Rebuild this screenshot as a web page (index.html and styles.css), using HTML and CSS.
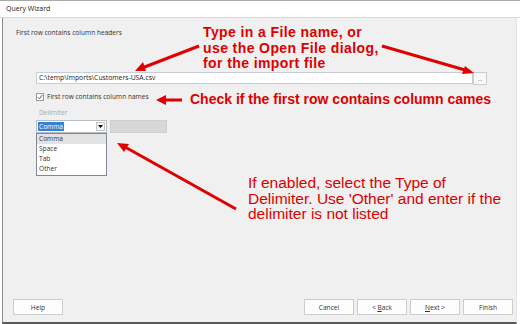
FILE: index.html
```html
<!DOCTYPE html>
<html lang="en">
<head>
    <meta charset="UTF-8">
    <title>Query Wizard</title>
    <link rel="stylesheet" href="styles.css">
</head>
<body>
<div class="window">
    <div class="titlebar">Query Wizard</div>
    <div class="client">
        <p class="page-title">First row contains column headers</p>

        <div class="file-row">
            <div class="textbox file-row__path">C:\temp\Imports\Customers-USA.csv</div>
            <button class="file-row__browse">...</button>
        </div>

        <label class="check-row">
            <span class="checkbox">
                <svg width="6" height="6" viewBox="0 0 6 6"><path d="M0.8 3.2 L2.4 4.8 L5.3 1" fill="none" stroke="#555" stroke-width="1"/></svg>
            </span>
            First row contains column names
        </label>

        <div class="group-label">Delimiter</div>
        <div class="delim-row">
            <div class="combo">
                <span class="combo__value"><span class="combo__selected">Comma</span></span>
                <span class="combo__btn">
                    <svg width="5" height="3" viewBox="0 0 5 3"><path d="M0 0 H5 L2.5 3 Z" fill="#000"/></svg>
                </span>
                <ul class="combo__list">
                    <li class="combo__item combo__item--hot">Comma</li>
                    <li class="combo__item">Space</li>
                    <li class="combo__item">Tab</li>
                    <li class="combo__item">Other</li>
                </ul>
            </div>
            <div class="textbox textbox--disabled"></div>
        </div>

        <div class="buttons">
            <button class="btn">Help</button>
            <div class="buttons__nav">
                <button class="btn">Cancel</button>
                <button class="btn">&lt; <u>B</u>ack</button>
                <button class="btn"><u>N</u>ext &gt;</button>
                <button class="btn">Finish</button>
            </div>
        </div>
    </div>

    <!-- red notes drawn on top of the dialog -->
    <div class="note note--file">Type in a File name, or<br>use the Open File dialog,<br>for the import file</div>
    <div class="note note--check">Check if the first row contains column cames</div>
    <div class="note note--delim">If enabled, select the Type of<br>Delimiter. Use 'Other' and enter if the<br>delimiter is not listed</div>

    <svg class="arrows" width="520" height="324" viewBox="0 0 520 324">
        <g stroke="#e00000" stroke-width="3" fill="none">
            <line x1="199" y1="45" x2="142" y2="67"/>
            <line x1="382" y1="45" x2="465" y2="69"/>
            <line x1="182" y1="99" x2="165" y2="99"/>
            <line x1="236" y1="208" x2="125" y2="146"/>
        </g>
        <g fill="#e00000">
            <polygon points="135,70 146,70 143,61"/>
            <polygon points="474,72 465,65 462,73"/>
            <polygon points="156,99 166,94 166,104"/>
            <polygon points="117,142 124,151 129,143"/>
        </g>
    </svg>
</div>
</body>
</html>
```

FILE: styles.css
```css
* {
    margin: 0;
    padding: 0;
    box-sizing: border-box;
}

body {
    background: #ffffff;
}

.window {
    position: relative;
    width: 520px;
    height: 324px;
    display: flex;
    flex-direction: column;
    font-family: "Open Sans", "Noto Sans", sans-serif;
    font-size: 6.6px;
    color: #333;
    background: #fff;
    border-top: 1px solid #a8a8a8;
}

.titlebar {
    height: 17px;
    line-height: 16px;
    padding-left: 6px;
    font-size: 7px;
    background: #fff;
    border-bottom: 1px solid #d6d6d6;
    color: #222;
}

.client {
    flex: 1;
    display: flex;
    flex-direction: column;
    margin-left: 2px;
    margin-right: 3px;
    background: #f0f0f0;
    border-left: 1px solid #8a8a8a;
    border-right: 1px solid #e4e4e4;
    border-bottom: 2px solid #5a5a5a;
}

.page-title {
    margin: 10px 0 0 13px;
    line-height: 10px;
}

.textbox {
    height: 12px;
    background: #fff;
    border: 1px solid #c9ced6;
}

.file-row {
    display: flex;
    margin: 34px 0 0 33px;
}

.file-row__path {
    width: 437px;
    line-height: 10px;
    padding-left: 2px;
    font-size: 6.8px;
    color: #222;
}

.file-row__browse {
    width: 14px;
    height: 13px;
    font: 6px "Open Sans", sans-serif;
    line-height: 8px;
    color: #555;
    background: #f9f9f9;
    border: 1px solid #c9ced6;
}

.check-row {
    display: flex;
    align-items: center;
    gap: 3px;
    margin: 7px 0 0 33px;
    line-height: 10px;
}

.checkbox {
    display: flex;
    align-items: center;
    justify-content: center;
    width: 8px;
    height: 8px;
    background: #fff;
    border: 1px solid #9a9a9a;
}

.group-label {
    margin: 6px 0 0 36px;
    line-height: 10px;
    color: #a8a8a8;
}

.delim-row {
    display: flex;
    gap: 3px;
    margin: 2px 0 0 33px;
}

.combo {
    position: relative;
    display: flex;
    width: 71px;
    height: 13px;
    background: #fff;
    border: 1px solid #b8bcc4;
}

.combo__value {
    flex: 1;
    padding: 1px 0 0 1px;
}

.combo__selected {
    display: inline-block;
    line-height: 9px;
    padding: 0 1px;
    color: #fff;
    background: #3284d6;
}

.combo__btn {
    display: flex;
    align-items: center;
    justify-content: center;
    width: 9px;
    margin: 1px;
    background: #f4f4f4;
    border: 1px solid #c4c4c4;
}

.combo__list {
    position: absolute;
    top: 12px;
    left: -1px;
    width: 71px;
    list-style: none;
    background: #fff;
    border: 1px solid #7e8896;
    padding-bottom: 1px;
}

.combo__item {
    height: 10px;
    line-height: 10px;
    padding-left: 2px;
}

.combo__item--hot {
    background: #e3e3e3;
}

.textbox--disabled {
    width: 57px;
    height: 13px;
    background: #d7d7d7;
    border-color: #cfcfcf;
}

.buttons {
    display: flex;
    justify-content: space-between;
    margin: auto 3px 7px 10px;
}

.buttons__nav {
    display: flex;
    gap: 3px;
}

.btn {
    width: 50px;
    height: 16px;
    font: 6.6px "Open Sans", sans-serif;
    color: #333;
    background: #fdfdfd;
    border: 1px solid #cdcdcd;
}

.note {
    position: absolute;
    font-family: "Liberation Sans", Arial, sans-serif;
    font-weight: bold;
    font-size: 14px;
    color: #dc0000;
    white-space: nowrap;
}

.note--file {
    left: 203px;
    top: 24px;
    line-height: 15.5px;
    letter-spacing: 0.4px;
}

.note--check {
    left: 190px;
    top: 90px;
    line-height: 16px;
}

.note--delim {
    left: 248px;
    top: 174px;
    line-height: 15.5px;
    font-weight: normal;
    font-size: 15.5px;
}

.arrows {
    position: absolute;
    top: 0;
    left: 0;
    pointer-events: none;
}
```
